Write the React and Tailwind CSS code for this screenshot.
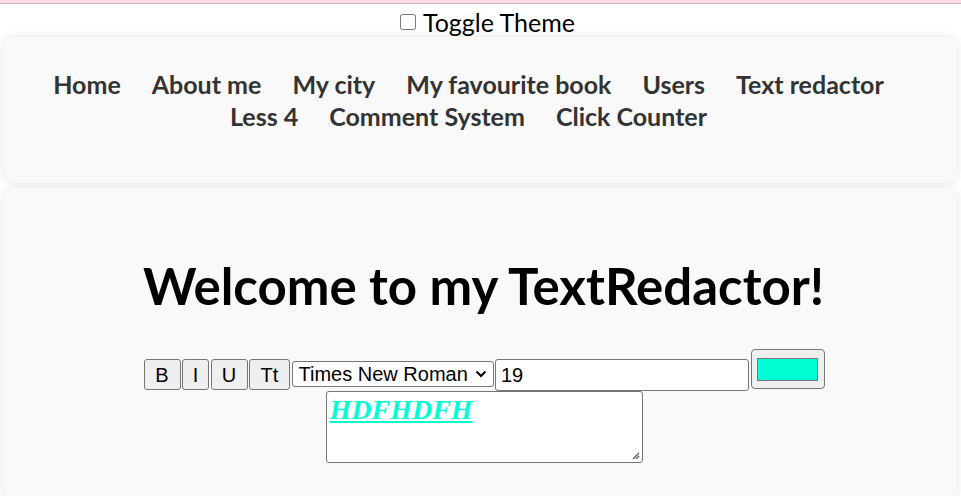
export default function App() {
  const seg = { fontFamily: 'Lato, "Open Sans", sans-serif' };
  const links = ["Home", "About me", "My city", "My favourite book", "Users", "Text redactor", "Less 4", "Comment System", "Click Counter"];
  return (
    <div className="min-h-[496px] bg-white overflow-hidden" style={seg}>
      <div className="h-[3px] bg-[#fcdce3]" />
      <div className="h-[1px] bg-[#c9b6ba]" />
      <div className="flex justify-center items-end h-[33px] pl-[14px] text-[25px] leading-[30px] text-black">
        <label className="flex items-center gap-[7px]">
          <input type="checkbox" className="w-[16px] h-[16px] m-0" />
          <span>Toggle Theme</span>
        </label>
      </div>
      <div className="mx-[4px] rounded-[10px] bg-[#f9f9f9] shadow-[0_0_10px_rgba(0,0,0,0.1)] pt-[31px] pb-[51px] pl-[7px]">
        <nav className="flex flex-wrap justify-center leading-[32px] px-[20px]">
          {links.map((l) => (
            <a key={l} className="text-[25px] font-bold text-[#333] mr-[31px] whitespace-nowrap">{l}</a>
          ))}
        </nav>
      </div>
      <div className="mt-[5px] mx-[4px] rounded-[10px] bg-[#f9f9f9] shadow-[0_0_10px_rgba(0,0,0,0.1)] pt-[68px] pb-[40px] pl-[6px]">
        <h1 className="text-center text-[51px] font-bold text-black leading-[60px]">Welcome to my TextRedactor!</h1>
        <div className="mt-[33px] flex flex-wrap justify-center items-start gap-x-[1.5px] pl-[1px]" style={{ fontFamily: '"Liberation Sans", Arial, sans-serif' }}>
          {["B", "I", "U", "Tt"].map((b, i) => (
            <button key={b} className={`mt-[10px] h-[31px] ${["w-[37px]", "w-[27px]", "w-[37px]", "w-[41px]"][i]} bg-[#efefef] border border-[#767676] rounded-[3px] text-[20px] text-black flex items-center justify-center`}>{b}</button>
          ))}
          <div className="mt-[12px] w-[202px] h-[26px] bg-white border border-[#767676] rounded-[3px] flex items-center pl-[6px] pr-[6px] text-[20px] text-black justify-between">
            <span>Times New Roman</span>
            <svg width="12" height="8" viewBox="0 0 12 8"><path d="M1.5 1.5 L6 6 L10.5 1.5" fill="none" stroke="#000" strokeWidth="2" /></svg>
          </div>
          <div className="mt-[10px] w-[254px] h-[32px] bg-white border border-[#767676] rounded-[3px] flex items-center pl-[5px] text-[20px] text-black">19</div>
          <div className="w-[74px] h-[40px] bg-[#efefef] border border-[#767676] rounded-[4px] flex items-center justify-center">
            <div className="w-[61px] h-[23px] bg-[#00ffd5] border border-[#777]" />
          </div>
          <div className="basis-full h-0" />
          <div className="relative w-[317px] h-[72px] bg-white border border-[#767676] rounded-[3px] px-[3px] pt-[2px] leading-[31px]" style={{ fontFamily: '"Liberation Serif", "Times New Roman", serif' }}>
            <span className="text-[28px] font-bold italic underline text-[#00ffd5]">HDFHDFH</span>
            <svg className="absolute right-[2px] bottom-[2px]" width="10" height="10" viewBox="0 0 10 10"><path d="M9 3 L3 9 M9 6 L6 9" stroke="#555" strokeWidth="1.2" /></svg>
          </div>
        </div>
      </div>
    </div>
  );
}
